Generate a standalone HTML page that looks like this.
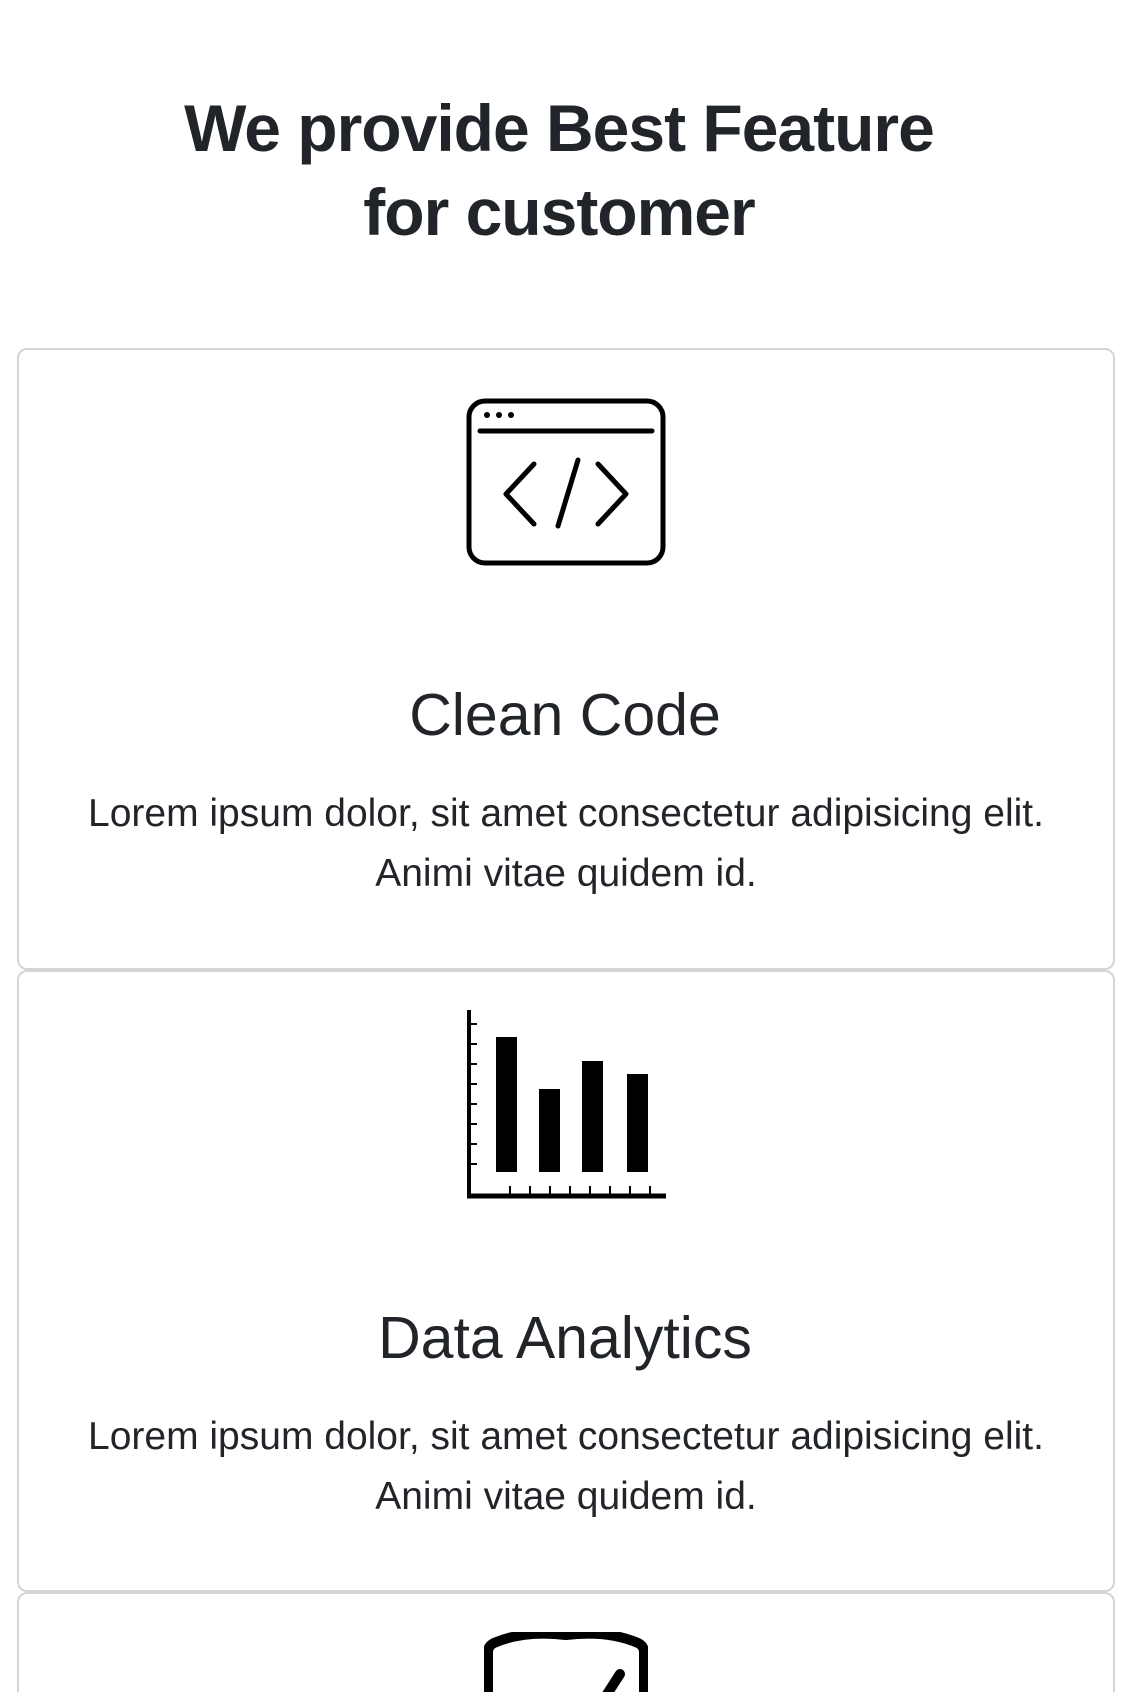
<!DOCTYPE html>
<html><head><meta charset="utf-8"><style>
html,body{margin:0;padding:0;background:#fff;width:1140px;height:1692px;overflow:hidden;font-family:"Liberation Sans",sans-serif;color:#212529;position:relative}
h1{position:absolute;top:86px;left:-11px;width:1140px;margin:0;text-align:center;font-size:66px;line-height:84px;font-weight:bold;letter-spacing:-1px}
.card{position:absolute;left:17px;width:1098px;border:2px solid #d4d4d4;border-radius:10px;box-sizing:border-box;background:#fff}
.t{position:absolute;left:-5px;width:1140px;text-align:center;font-size:59px;font-weight:300;margin:0}
.p{position:absolute;left:-4px;width:1140px;text-align:center;font-size:39px;line-height:60px;margin:0}
svg{position:absolute}
</style></head><body>
<h1>We provide Best Feature<br>for customer</h1>
<div class="card" style="top:348px;height:622px"></div>
<div class="card" style="top:970px;height:622px"></div>
<div class="card" style="top:1592px;height:140px"></div>

<svg style="left:466px;top:398px" width="200" height="168" viewBox="0 0 200 168">
<rect x="3" y="3" width="194" height="162" rx="16" fill="none" stroke="#000" stroke-width="5"/>
<line x1="14" y1="33" x2="186" y2="33" stroke="#000" stroke-width="5" stroke-linecap="round"/>
<circle cx="21" cy="17" r="3" fill="#000"/><circle cx="33" cy="17" r="3" fill="#000"/><circle cx="45" cy="17" r="3" fill="#000"/>
<polyline points="68,66 40,96 68,126" fill="none" stroke="#000" stroke-width="5" stroke-linecap="round" stroke-linejoin="round"/>
<polyline points="132,66 160,96 132,126" fill="none" stroke="#000" stroke-width="5" stroke-linecap="round" stroke-linejoin="round"/>
<line x1="112" y1="62" x2="92" y2="128" stroke="#000" stroke-width="5" stroke-linecap="round"/>
</svg>
<div class="t" style="top:681px">Clean Code</div>
<div class="p" style="top:784px">Lorem ipsum dolor, sit amet consectetur adipisicing elit.<br>Animi vitae quidem id.</div>

<svg style="left:466px;top:1010px" width="202" height="190" viewBox="0 0 202 190">
<line x1="3" y1="0" x2="3" y2="188" stroke="#000" stroke-width="4"/>
<line x1="1" y1="186" x2="200" y2="186" stroke="#000" stroke-width="5"/>
<g stroke="#000" stroke-width="2">
<line x1="3" y1="14" x2="11" y2="14"/><line x1="3" y1="34" x2="11" y2="34"/><line x1="3" y1="54" x2="11" y2="54"/><line x1="3" y1="74" x2="11" y2="74"/><line x1="3" y1="94" x2="11" y2="94"/><line x1="3" y1="114" x2="11" y2="114"/><line x1="3" y1="134" x2="11" y2="134"/><line x1="3" y1="154" x2="11" y2="154"/>
<line x1="44" y1="176" x2="44" y2="186"/><line x1="64" y1="176" x2="64" y2="186"/><line x1="84" y1="176" x2="84" y2="186"/><line x1="104" y1="176" x2="104" y2="186"/><line x1="124" y1="176" x2="124" y2="186"/><line x1="144" y1="176" x2="144" y2="186"/><line x1="164" y1="176" x2="164" y2="186"/><line x1="184" y1="176" x2="184" y2="186"/>
</g>
<rect x="30" y="27" width="21" height="135" fill="#000"/>
<rect x="73" y="79" width="21" height="83" fill="#000"/>
<rect x="116" y="51" width="21" height="111" fill="#000"/>
<rect x="161" y="64" width="21" height="98" fill="#000"/>
</svg>
<div class="t" style="top:1304px">Data Analytics</div>
<div class="p" style="top:1407px">Lorem ipsum dolor, sit amet consectetur adipisicing elit.<br>Animi vitae quidem id.</div>

<svg style="left:484px;top:1632px" width="164" height="70" viewBox="0 0 164 70">
<path d="M4 70 V20 Q4 14 10 11 Q40 -2 82 3 Q124 -2 154 11 Q160 14 160 20 V70" fill="none" stroke="#000" stroke-width="10"/>
<path d="M136 42 L118 70" stroke="#000" stroke-width="10" stroke-linecap="round"/>
</svg>
</body></html>
